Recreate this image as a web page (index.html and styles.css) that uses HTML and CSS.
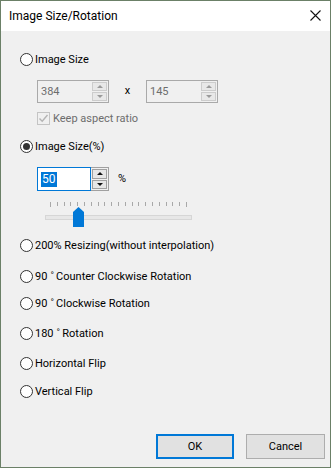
FILE: index.html
```html
<!DOCTYPE html>
<html lang="en">
<head>
    <meta charset="UTF-8">
    <title>Image Size/Rotation</title>
    <link rel="stylesheet" href="styles.css">
</head>
<body>
    <div class="window">
        <div class="titlebar">
            <span class="title">Image Size/Rotation</span>
            <svg class="close" width="11" height="11" viewBox="0 0 11 11">
                <path d="M0.5 0.5 L10.5 10.5 M10.5 0.5 L0.5 10.5" stroke="#111" stroke-width="1.1" fill="none"/>
            </svg>
        </div>
        <div class="content">
            <div class="option row-size">
                <span class="radio"></span>
                <span class="label">Image Size</span>
            </div>

            <div class="size-row">
                <div class="spin disabled">
                    <span class="spin-text">384</span>
                    <div class="spin-buttons">
                        <span class="spin-btn"><i class="arrow up"></i></span>
                        <span class="spin-btn"><i class="arrow down"></i></span>
                    </div>
                </div>
                <span class="times">x</span>
                <div class="spin disabled">
                    <span class="spin-text">145</span>
                    <div class="spin-buttons">
                        <span class="spin-btn"><i class="arrow up"></i></span>
                        <span class="spin-btn"><i class="arrow down"></i></span>
                    </div>
                </div>
            </div>

            <div class="check-row">
                <span class="checkbox">
                    <svg width="11" height="11" viewBox="0 0 11 11">
                        <path d="M1.5 5.5 L4.2 8.3 L9.5 2" stroke="#b4b4b4" stroke-width="1.4" fill="none"/>
                    </svg>
                </span>
                <span class="check-label">Keep aspect ratio</span>
            </div>

            <div class="option row-percent">
                <span class="radio checked"></span>
                <span class="label">Image Size(%)</span>
            </div>

            <div class="percent-row">
                <div class="spin active">
                    <span class="spin-text"><span class="selected">50</span></span>
                    <div class="spin-buttons">
                        <span class="spin-btn"><i class="arrow up"></i></span>
                        <span class="spin-btn"><i class="arrow down"></i></span>
                    </div>
                </div>
                <span class="percent">%</span>
            </div>

            <div class="slider">
                <div class="ticks" id="ticks"></div>
                <div class="track"></div>
                <svg class="thumb" width="11" height="20" viewBox="0 0 11 20">
                    <polygon points="0,5 5.5,0 11,5 11,20 0,20" fill="#0078d7"/>
                </svg>
            </div>

            <div class="option row-200">
                <span class="radio"></span>
                <span class="label">200% Resizing(without interpolation)</span>
            </div>
            <div class="option row-ccw">
                <span class="radio"></span>
                <span class="label">90<span class="deg">˚</span>Counter Clockwise Rotation</span>
            </div>
            <div class="option row-cw">
                <span class="radio"></span>
                <span class="label">90<span class="deg">˚</span>Clockwise Rotation</span>
            </div>
            <div class="option row-180">
                <span class="radio"></span>
                <span class="label">180<span class="deg">˚</span>Rotation</span>
            </div>
            <div class="option row-hflip">
                <span class="radio"></span>
                <span class="label">Horizontal Flip</span>
            </div>
            <div class="option row-vflip">
                <span class="radio"></span>
                <span class="label">Vertical Flip</span>
            </div>

            <div class="button-row">
                <button type="button" class="btn default">OK</button>
                <button type="button" class="btn">Cancel</button>
            </div>
        </div>
    </div>
    <script>
        const ticks = document.getElementById('ticks');
        for (let i = 0; i <= 20; i++) {
            const t = document.createElement('span');
            t.className = (i === 0 || i === 20) ? 'tick end' : 'tick';
            ticks.appendChild(t);
        }
    </script>
</body>
</html>
```

FILE: styles.css
```css
* {
    margin: 0;
    padding: 0;
    box-sizing: border-box;
}

body {
    font-family: Roboto, "Liberation Sans", sans-serif;
    font-size: 11px;
    color: #000;
    background: #f0f0f0;
}

/* Dialog frame */
.window {
    width: 331px;
    height: 468px;
    border: 1px solid #6b8067;
    background: #f0f0f0;
    display: flex;
    flex-direction: column;
}

.titlebar {
    height: 30px;
    background: #ffffff;
    display: flex;
    align-items: center;
    justify-content: space-between;
    padding: 0 9px 0 8px;
}

.title {
    font-size: 12px;
    color: #000;
    margin-top: -1px;
}

.close {
    margin-top: -1px;
}

.content {
    flex: 1;
    display: flex;
    flex-direction: column;
    padding-left: 19px;
}

/* Radio options */
.option {
    display: flex;
    align-items: center;
    height: 16px;
}

.radio {
    width: 13px;
    height: 13px;
    border: 1px solid #333;
    border-radius: 50%;
    background: #fff;
    display: flex;
    align-items: center;
    justify-content: center;
    flex-shrink: 0;
}

.radio.checked::after {
    content: "";
    width: 7px;
    height: 7px;
    border-radius: 50%;
    background: #333;
}

.label {
    margin-left: 2px;
    white-space: nowrap;
}

.deg {
    margin: 0 2px 0 3px;
}

.row-size { margin-top: 20px; }
.row-percent { margin-top: 13px; }
.row-200 { margin-top: 9px; }
.row-ccw { margin-top: 15px; }
.row-cw { margin-top: 11px; }
.row-180 { margin-top: 14px; }
.row-hflip { margin-top: 14px; }
.row-vflip { margin-top: 12px; }

/* Spin boxes */
.size-row {
    display: flex;
    align-items: center;
    margin-top: 13px;
    padding-left: 17px;
}

.spin {
    width: 72px;
    height: 23px;
    display: flex;
    border: 1px solid #a9a9a9;
}

.spin-text {
    flex: 1;
    display: flex;
    align-items: center;
    padding-left: 3px;
    color: #6d6d6d;
}

.spin-buttons {
    width: 16px;
    display: flex;
    flex-direction: column;
    gap: 1px;
    padding: 1px 1px 1px 0;
}

.spin-btn {
    flex: 1;
    border: 1px solid #cccccc;
    background: #e8e8e8;
    display: flex;
    align-items: center;
    justify-content: center;
}

.arrow {
    width: 0;
    height: 0;
    border-left: 3px solid transparent;
    border-right: 3px solid transparent;
}

.arrow.up { border-bottom: 3px solid #9a9a9a; }
.arrow.down { border-top: 3px solid #9a9a9a; }

.times {
    width: 37px;
    text-align: center;
    margin-top: -2px;
}

.check-row {
    display: flex;
    align-items: center;
    margin-top: 8px;
    padding-left: 17px;
    height: 14px;
}

.checkbox {
    width: 13px;
    height: 13px;
    border: 1px solid #c4c4c4;
    display: flex;
    align-items: center;
    justify-content: center;
}

.check-label {
    margin-left: 3px;
    color: #6d6d6d;
}

.percent-row {
    display: flex;
    align-items: center;
    margin-top: 13px;
    padding-left: 17px;
}

.spin.active {
    height: 24px;
    border-color: #a0a0a0;
    background: #fff;
}

.spin.active .spin-text {
    border: 1px solid #0078d7;
    margin: -1px 0 -1px -1px;
    padding-left: 3px;
    color: #000;
}

.spin.active .spin-buttons {
    background: #f0f0f0;
    width: 17px;
    padding-left: 1px;
}

.spin.active .spin-btn {
    border-color: #a0a0a0;
    background: #e6e6e6;
}

.spin.active .arrow.up { border-bottom-color: #111; }
.spin.active .arrow.down { border-top-color: #111; }

.selected {
    background: #0078d7;
    color: #fff;
    padding: 0 1px;
    font-size: 12px;
    line-height: 15px;
}

.percent {
    margin-left: 9px;
    margin-top: -2px;
}

/* Trackbar */
.slider {
    position: relative;
    height: 27px;
    width: 147px;
    margin-top: 10px;
    margin-left: 25px;
}

.ticks {
    position: absolute;
    left: 5px;
    top: 1px;
    width: 137px;
    display: flex;
    justify-content: space-between;
}

.tick {
    width: 1px;
    height: 4px;
    background: #a8a8a8;
}

.tick.end {
    height: 5px;
}

.track {
    position: absolute;
    left: 0;
    top: 14px;
    width: 147px;
    height: 5px;
    border: 1px solid #d6d6d6;
    background: #e7e7e7;
}

.thumb {
    position: absolute;
    left: 28px;
    top: 6px;
}

/* Buttons */
.button-row {
    margin-top: auto;
    display: flex;
    justify-content: flex-end;
    gap: 12px;
    padding: 0 5px 8px 0;
}

.btn {
    width: 79px;
    height: 25px;
    font-family: inherit;
    font-size: 11px;
    color: #000;
    background: #e1e1e1;
    border: 1px solid #adadad;
}

.btn.default {
    border: 2px solid #0078d7;
    width: 78px;
}
```
